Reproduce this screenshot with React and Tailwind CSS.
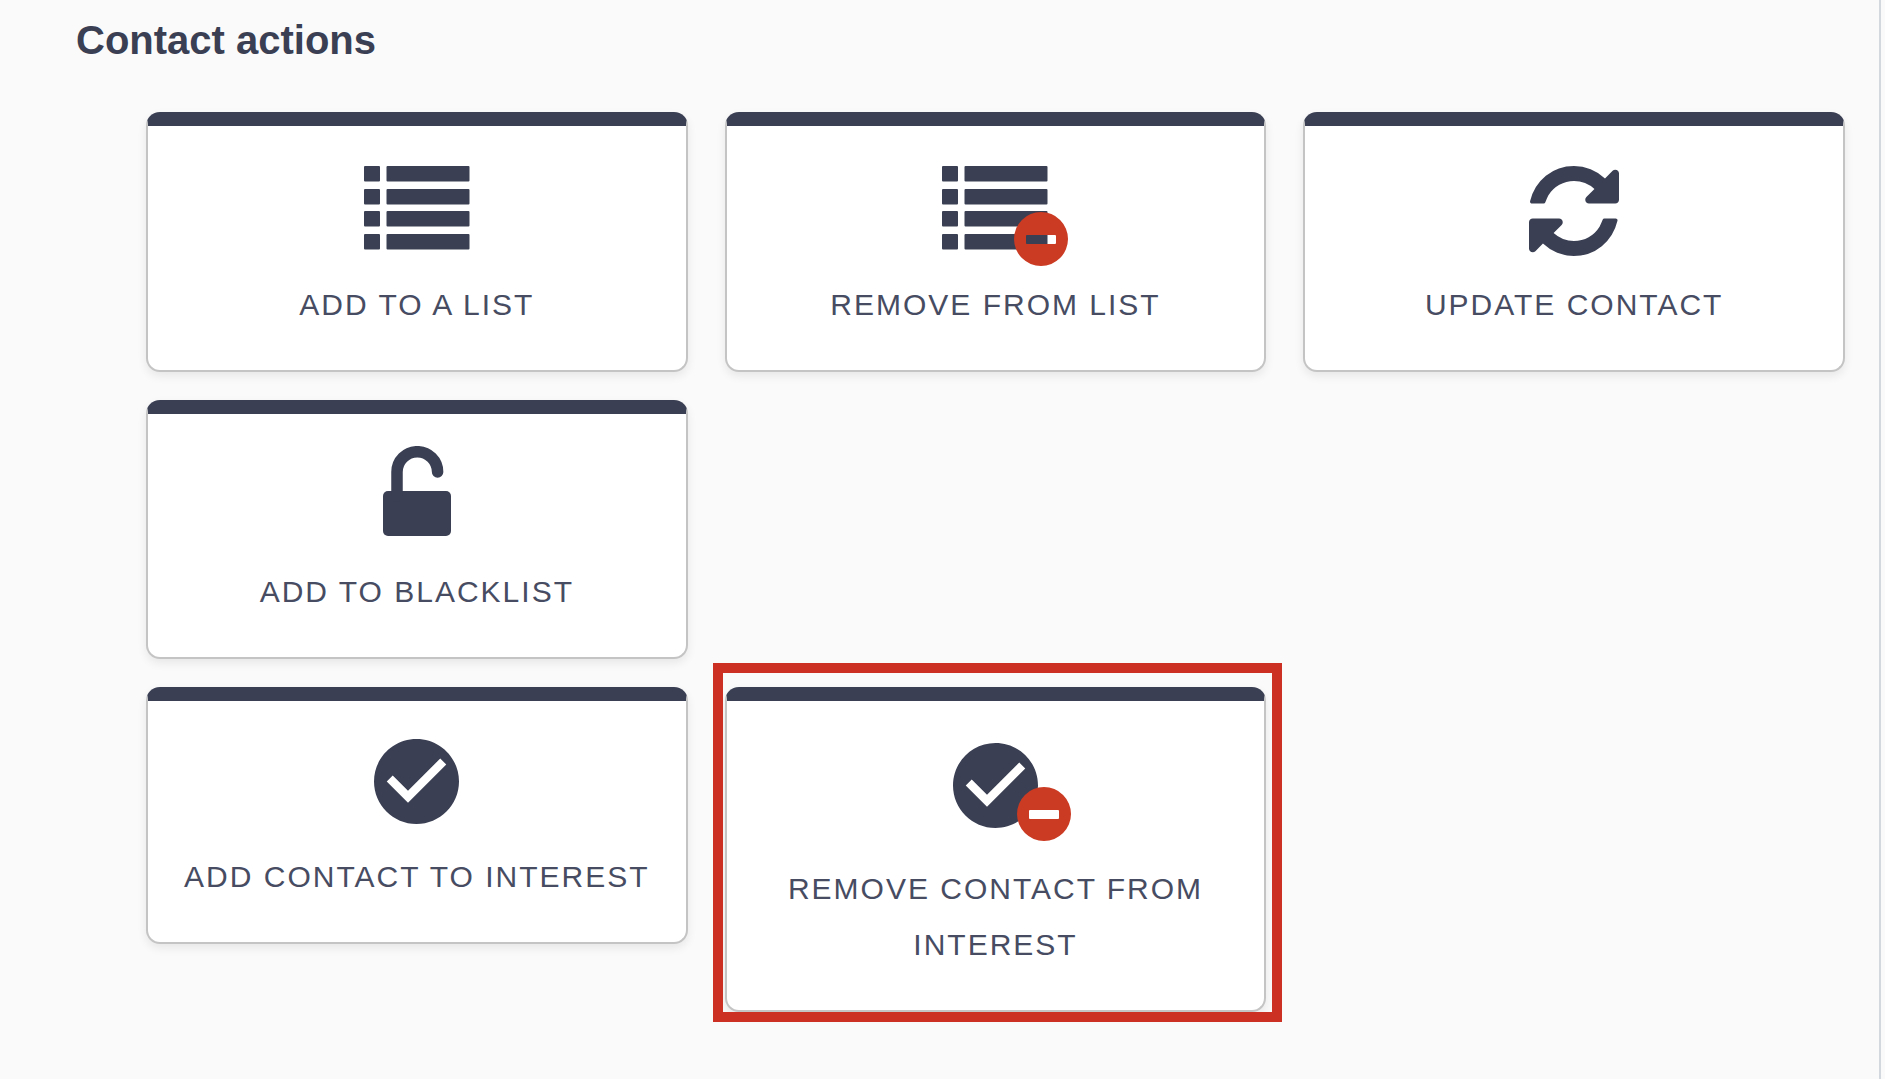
import React from 'react';
import { MdCheckCircle } from 'react-icons/md';

const BADGE_PATH =
  'M27 0a27 27 0 1 1 0 54a27 27 0 1 1 0-54ZM13 23a1 1 0 0 0-1 1v7a1 1 0 0 0 1 1h28a1 1 0 0 0 1-1v-7a1 1 0 0 0-1-1Z';

const ListIcon = () => (
  <svg viewBox="0 0 106 84" className="w-[106px] h-[84px] fill-current">
    {[0, 23, 45, 68].map(y => (
      <g key={y}>
        <rect x="0" y={y} width="16" height="15.5" rx="1" />
        <rect x="22.5" y={y} width="83" height="15.5" rx="1" />
      </g>
    ))}
  </svg>
);

const RefreshIcon = () => (
  <svg viewBox="0 0 1536 1536" className="w-[90px] h-[90px] fill-current">
    <path d="M1511 928q0 5-1 7-64 268-268 434.5t-478 166.5q-146 0-282.5-55t-243.5-157l-129 129q-19 19-45 19t-45-19-19-45v-448q0-26 19-45t45-19h448q26 0 45 19t19 45-19 45l-137 137q71 66 161 102t187 36q134 0 250-65t186-179q11-17 53-117 8-23 30-23h192q13 0 22.5 9.5t9.5 22.5zm25-800v448q0 26-19 45t-45 19h-448q-26 0-45-19t-19-45 19-45l138-138q-148-137-349-137-134 0-250 65t-186 179q-11 17-53 117-8 23-30 23h-199q-13 0-22.5-9.5t-9.5-22.5v-7q65-268 270-434.5t480-166.5q146 0 284 55.5t245 156.5l130-129q19-19 45-19t45 19 19 45z" />
  </svg>
);

const UnlockIcon = () => (
  <svg viewBox="0 0 68 90" className="w-[68px] h-[90px]">
    <rect x="0" y="45" width="68" height="45" rx="5" fill="currentColor" />
    <path
      d="M14 50V26a20.3 20.3 0 0 1 40.6 0"
      fill="none"
      stroke="currentColor"
      strokeWidth="11.5"
      strokeLinecap="round"
    />
  </svg>
);

const CheckIcon = () => <MdCheckCircle viewBox="2 2 20 20" className="w-[85px] h-[85px]" />;

// The minus is cut out of the disc, "solid" fills it with white
const RemoveBadge = ({ className, solid }) => (
  <svg viewBox="0 0 54 54" className={`absolute w-[54px] h-[54px] text-[#cb3a22] ${className}`}>
    {solid && <rect x="11" y="22" width="32" height="11" fill="#fff" />}
    <path d={BADGE_PATH} fill="currentColor" fillRule="evenodd" />
  </svg>
);

const ActionCard = ({ label, iconClass, children }) => (
  <button
    type="button"
    className="w-full flex flex-col items-center bg-white border-2 border-t-[14px] border-[#c4c4c4] border-t-[#3a3f53] rounded-[14px] px-6 pb-[37px] shadow-[0_4px_10px_rgba(0,0,0,0.08)] cursor-pointer"
  >
    <span className={`relative flex ${iconClass}`}>{children}</span>
    <span className="text-[30px] leading-[56px] tracking-[2px] uppercase text-center text-[#474c62]">{label}</span>
  </button>
);

export default function App() {
  return (
    <div className="min-h-screen flex bg-[#fafafa] pr-1 text-[#3a3f53] font-['Liberation_Sans',Arial,sans-serif]">
      <main className="flex-1 border-r-2 border-[#d3d8df] pl-[76px] pr-[34px] pt-4">
        <h1 className="text-[40px] leading-[48px] font-bold">Contact actions</h1>

        <div className="grid grid-cols-3 gap-x-[37px] gap-y-7 items-start pl-[70px] pt-12">
          {/* List actions */}
          <ActionCard label="Add to a list" iconClass="pt-10 pb-[27px]">
            <ListIcon />
          </ActionCard>
          <ActionCard label="Remove from list" iconClass="pt-10 pb-[27px]">
            <ListIcon />
            <RemoveBadge className="left-[72px] top-[86px]" />
          </ActionCard>
          <ActionCard label="Update contact" iconClass="pt-10 pb-[21px]">
            <RefreshIcon />
          </ActionCard>

          {/* Blacklist */}
          <div className="col-span-3 grid grid-cols-3 gap-x-[37px]">
            <ActionCard label="Add to blacklist" iconClass="pt-8 pb-[28px]">
              <UnlockIcon />
            </ActionCard>
          </div>

          {/* Interests */}
          <ActionCard label="Add contact to interest" iconClass="pt-[38px] pb-[25px]">
            <CheckIcon />
          </ActionCard>
          <div className="relative">
            <ActionCard label="Remove contact from interest" iconClass="pt-[42px] pb-[33px]">
              <CheckIcon />
              <RemoveBadge solid className="left-[64px] top-[86px]" />
            </ActionCard>
            <div className="absolute -top-6 -bottom-[10px] -left-3 -right-4 border-[10px] border-[#cb3023] pointer-events-none" />
          </div>
        </div>
      </main>
    </div>
  );
}
